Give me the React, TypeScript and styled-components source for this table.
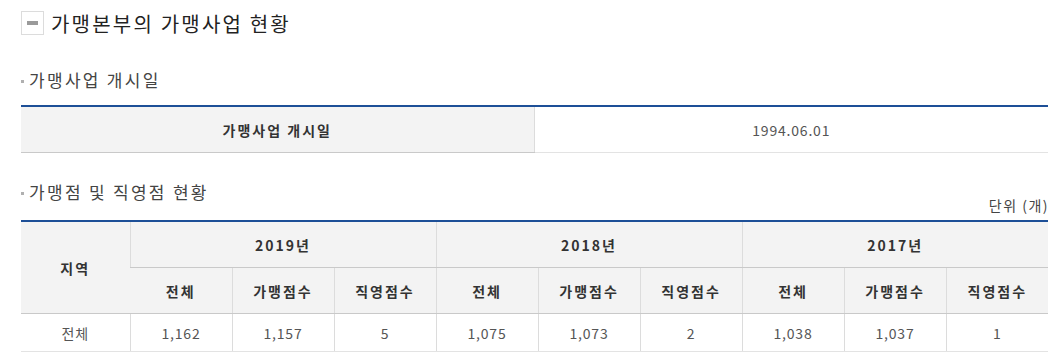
import React from "react";
import styled, { createGlobalStyle } from "styled-components";

const GlobalStyle = createGlobalStyle`
  html, body { margin: 0; padding: 0; background: #fff; }
  body {
    font-family: "Noto Sans CJK KR", "Noto Sans", "Liberation Sans", sans-serif;
    color: #333;
  }
`;

const Page = styled.div`
  width: 1027px;
  padding: 11px 0 0 21px;
`;

const TitleRow = styled.div`
  display: flex;
  align-items: center;
  gap: 7px;
  height: 24px;
`;

const ToggleBox = styled.span`
  box-sizing: border-box;
  width: 23px;
  height: 24px;
  border: 1px solid #dcdcdc;
  display: flex;
  align-items: center;
  justify-content: center;
  &::before {
    content: "";
    width: 11px;
    height: 4px;
    background: #9a9a9a;
  }
`;

const Title = styled.h2`
  margin: 0;
  font-size: 20px;
  font-weight: 400;
  letter-spacing: 2.2px;
  color: #222;
  line-height: 24px;
  margin-top: 1px;
`;

const SubTitle = styled.h3<{ $top: number }>`
  margin: ${(p) => p.$top}px 0 0 0;
  display: flex;
  align-items: center;
  gap: 5px;
  font-size: 17px;
  font-weight: 400;
  letter-spacing: 2.3px;
  line-height: 24px;
  height: 24px;
  color: #444;
  &::before {
    content: "";
    width: 3px;
    height: 3px;
    background: #b0b0b0;
    margin-top: 2px;
  }
`;

const SubHeadRow = styled.div`
  display: flex;
  justify-content: space-between;
  align-items: flex-start;
  height: 40px;
  margin-top: 27px;
`;

const Unit = styled.span`
  align-self: flex-end;
  font-size: 14px;
  line-height: 16px;
  color: #444;
  letter-spacing: 1.5px;
  margin-bottom: 7px;
  margin-right: -1px;
`;

const Table = styled.table<{ $top?: number }>`
  width: 1027px;
  border-collapse: collapse;
  table-layout: fixed;
  border-top: 2px solid #1d4f97;
  margin-top: ${(p) => p.$top ?? 0}px;
`;

const Th = styled.th<{ $h: number; $bottom?: string }>`
  background: #f3f3f3;
  height: ${(p) => p.$h}px;
  padding: 0;
  font-size: 14px;
  font-weight: 700;
  letter-spacing: 2px;
  color: #333;
  text-align: center;
  border-left: 1px solid #dcdcdc;
  border-bottom: 1px solid ${(p) => p.$bottom ?? "#c9c9c9"};
  &:first-child { border-left: none; }
`;

const Td = styled.td<{ $h: number }>`
  height: ${(p) => p.$h}px;
  padding: 0;
  font-size: 14px;
  color: #555;
  text-align: center;
  letter-spacing: 0.8px;
  border-left: 1px solid #dcdcdc;
  border-bottom: 1px solid #e3e3e3;
  &:first-child { border-left: none; }
`;

const years = [
  { year: "2019년", total: "1,162", fr: "1,157", direct: "5" },
  { year: "2018년", total: "1,075", fr: "1,073", direct: "2" },
  { year: "2017년", total: "1,038", fr: "1,037", direct: "1" },
];

export default function App() {
  return (
    <>
      <GlobalStyle />
      <Page>
        <TitleRow>
          <ToggleBox />
          <Title>가맹본부의 가맹사업 현황</Title>
        </TitleRow>

        <SubTitle $top={33}>가맹사업 개시일</SubTitle>
        <Table $top={13}>
          <colgroup>
            <col style={{ width: 513 }} />
            <col style={{ width: 514 }} />
          </colgroup>
          <tbody>
            <tr>
              <Th $h={45}>가맹사업 개시일</Th>
              <Td $h={45}>1994.06.01</Td>
            </tr>
          </tbody>
        </Table>

        <SubHeadRow>
          <SubTitle $top={0}>가맹점 및 직영점 현황</SubTitle>
          <Unit>단위 (개)</Unit>
        </SubHeadRow>
        <Table>
          <colgroup>
            <col style={{ width: 109 }} />
            {Array.from({ length: 9 }).map((_, i) => (
              <col key={i} style={{ width: 102 }} />
            ))}
          </colgroup>
          <thead>
            <tr>
              <Th $h={45} rowSpan={2}>지역</Th>
              {years.map((y) => (
                <Th $h={45} key={y.year} colSpan={3}>
                  {y.year}
                </Th>
              ))}
            </tr>
            <tr>
              {years.map((y) => (
                <React.Fragment key={y.year}>
                  <Th $h={45}>전체</Th>
                  <Th $h={45}>가맹점수</Th>
                  <Th $h={45}>직영점수</Th>
                </React.Fragment>
              ))}
            </tr>
          </thead>
          <tbody>
            <tr>
              <Td $h={37}>전체</Td>
              {years.map((y) => (
                <React.Fragment key={y.year}>
                  <Td $h={37}>{y.total}</Td>
                  <Td $h={37}>{y.fr}</Td>
                  <Td $h={37}>{y.direct}</Td>
                </React.Fragment>
              ))}
            </tr>
          </tbody>
        </Table>
      </Page>
    </>
  );
}
